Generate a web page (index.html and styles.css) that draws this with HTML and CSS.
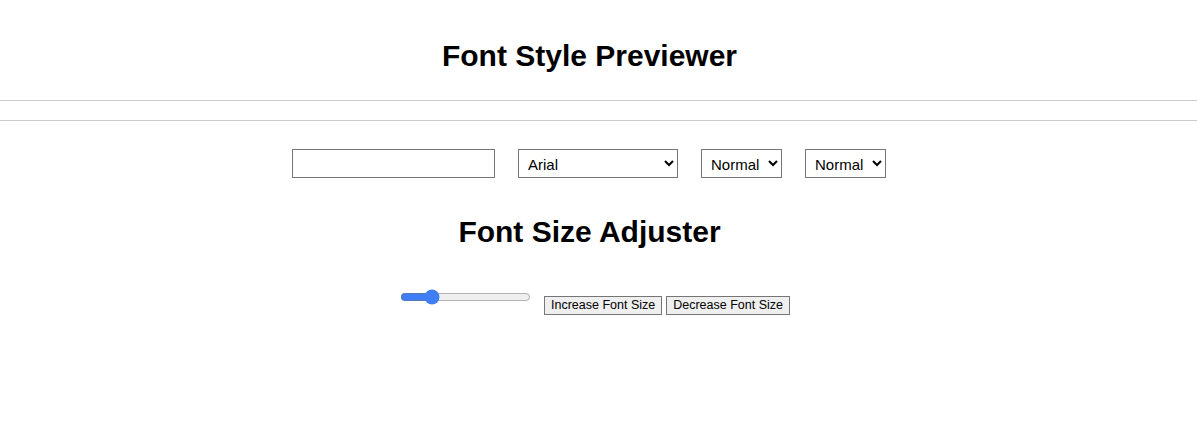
FILE: index.html
```html
<!DOCTYPE html>
<html lang="en">
<head>
<meta charset="utf-8">
<title>Font Style Previewer</title>
<link rel="stylesheet" href="styles.css">
</head>
<body>
<header class="site-header">
  <h1 class="title">Font Style Previewer</h1>
</header>
<div class="spacer"></div>
<main class="main">
  <div class="controls">
    <input class="text-input" type="text">
    <select class="sel sel-family">
      <option>Arial</option>
      <option>Times New Roman</option>
      <option>Courier New</option>
      <option>Verdana</option>
    </select>
    <select class="sel sel-small">
      <option>Normal</option>
      <option>Bold</option>
    </select>
    <select class="sel sel-small">
      <option>Normal</option>
      <option>Italic</option>
    </select>
  </div>
  <h2 class="subtitle">Font Size Adjuster</h2>
  <div class="size-row">
    <input class="slider" type="range" min="0" max="100" value="21">
    <button class="btn" type="button">Increase Font Size</button>
    <button class="btn" type="button">Decrease Font Size</button>
  </div>
</main>
</body>
</html>
```
FILE: styles.css
```css
html, body {
  margin: 0;
  padding: 0;
  background: #fff;
  font-family: "Liberation Sans", Arial, sans-serif;
  color: #000;
}

.site-header {
  border-bottom: 1px solid #cccccc;
  padding: 39px 18px 27px 0;
  text-align: center;
}

.title {
  margin: 0;
  font-size: 30px;
  line-height: 34px;
  font-weight: bold;
}

.spacer {
  height: 19px;
  border-bottom: 1px solid #cccccc;
}

.main {
  padding: 28px 18px 0 0;
  text-align: center;
}

.controls {
  display: flex;
  justify-content: center;
  align-items: center;
  gap: 23px;
  padding-right: 1px;
}

.text-input,
.sel {
  box-sizing: border-box;
  height: 29px;
  font-family: "Liberation Sans", Arial, sans-serif;
  font-size: 15px;
  padding: 5px;
  border: 1px solid #767676;
  border-radius: 0;
  background: #fff;
  color: #000;
  margin: 0;
}

.text-input { width: 203px; }
.sel-family { width: 160px; }
.sel-small { width: 81px; }

.subtitle {
  margin: 37px 0 0;
  font-size: 30px;
  line-height: 34px;
  font-weight: bold;
}

.size-row {
  margin-top: 40px;
  padding-left: 11px;
  display: flex;
  justify-content: center;
  align-items: flex-start;
  gap: 4px;
}

.slider {
  width: 131px;
  height: 16px;
  margin: 0 9px 0 0;
  accent-color: #3f7ef5;
}

.btn {
  font-family: "Liberation Sans", Arial, sans-serif;
  font-size: 12.5px;
  padding: 1px 6px 2px;
  margin: 7px 0 0;
  border: 1px solid #767676;
  border-radius: 0;
  background: #efefef;
  color: #000;
}
```
